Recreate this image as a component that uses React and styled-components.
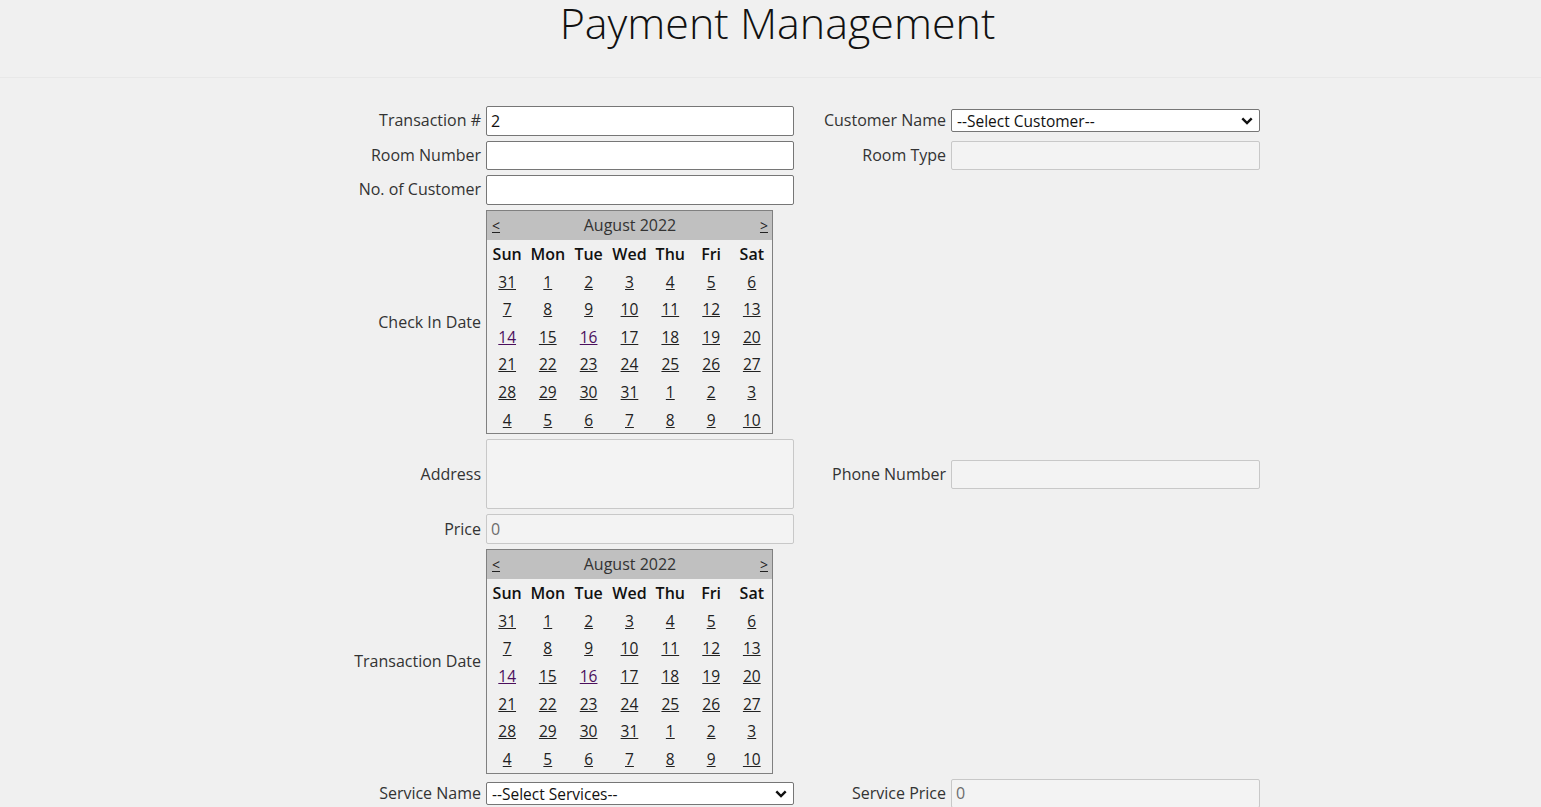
import React from "react"
import styled, { createGlobalStyle } from "styled-components"

const GlobalStyle = createGlobalStyle`
	html, body {
		margin: 0;
		padding: 0;
		overflow: hidden;
	}
	body {
		background: #f0f0f0;
		font-family: "Open Sans", "DejaVu Sans", sans-serif;
		color: #222;
	}
`

const weekDays = ["Sun", "Mon", "Tue", "Wed", "Thu", "Fri", "Sat"]
// weeks shown for August 2022 (starts on Sunday 31 July)
const weeks = [
	[31, 1, 2, 3, 4, 5, 6],
	[7, 8, 9, 10, 11, 12, 13],
	[14, 15, 16, 17, 18, 19, 20],
	[21, 22, 23, 24, 25, 26, 27],
	[28, 29, 30, 31, 1, 2, 3],
	[4, 5, 6, 7, 8, 9, 10],
]
const visited = [14, 16]

function Calendar() {
	return (
		<CalendarTable>
			<thead>
				<tr>
					<TitleCell colSpan={7}>
						<TitleBar>
							<NavLink href="#">&lt;</NavLink>
							<span>August 2022</span>
							<NavLink href="#">&gt;</NavLink>
						</TitleBar>
					</TitleCell>
				</tr>
				<tr>
					{weekDays.map((d) => (
						<DayName key={d}>{d}</DayName>
					))}
				</tr>
			</thead>
			<tbody>
				{weeks.map((week, w) => (
					<tr key={w}>
						{week.map((day, i) => (
							<DayCell key={i}>
								<DayLink
									href="#"
									$visited={w === 2 && visited.includes(day)}
								>
									{day}
								</DayLink>
							</DayCell>
						))}
					</tr>
				))}
			</tbody>
		</CalendarTable>
	)
}

function Dropdown({ placeholder }) {
	return (
		<SelectWrap>
			<Select defaultValue="">
				<option value="">{placeholder}</option>
			</Select>
			<Chevron viewBox="0 0 12 8" aria-hidden="true">
				<path d="M1.3 1.3 L6 6 L10.7 1.3" fill="none" stroke="#111" strokeWidth="2.4" />
			</Chevron>
		</SelectWrap>
	)
}

export default function App() {
	return (
		<>
			<GlobalStyle />
			<Header>
				<Title>Payment Management</Title>
			</Header>
			<Form>
				<Label>Transaction #</Label>
				<TextInput defaultValue="2" />
				<Label>Customer Name</Label>
				<Dropdown placeholder="--Select Customer--" />

				<Label>Room Number</Label>
				<TextInput />
				<Label>Room Type</Label>
				<TextInput disabled />

				<Label>No. of Customer</Label>
				<TextInput />
				<Empty />
				<Empty />

				<Label>Check In Date</Label>
				<Calendar />
				<Empty />
				<Empty />

				<Label>Address</Label>
				<TextArea disabled />
				<Label>Phone Number</Label>
				<TextInput disabled />

				<Label>Price</Label>
				<TextInput disabled defaultValue="0" />
				<Empty />
				<Empty />

				<Label>Transaction Date</Label>
				<Calendar />
				<Empty />
				<Empty />

				<Label>Service Name</Label>
				<Dropdown placeholder="--Select Services--" />
				<Label>Service Price</Label>
				<TextInput disabled defaultValue="0" />
			</Form>
		</>
	)
}

const Header = styled.header`
	height: 77px;
	border-bottom: 1px solid #e8e8e8;
	display: flex;
	justify-content: center;
	align-items: flex-start;
`

const Title = styled.h1`
	margin: 0;
	padding: 3px 0 0 14px;
	font-size: 43px;
	font-weight: 300;
	color: #111;
	line-height: 40px;
`

const Form = styled.div`
	display: grid;
	grid-template-columns: 200px 308px 147px 309px;
	justify-content: center;
	align-items: center;
	column-gap: 5px;
	row-gap: 5px;
	padding-top: 28px;
`

const Label = styled.label`
	text-align: right;
	font-size: 16px;
	color: #333;
	white-space: nowrap;
	line-height: 20px;
	margin-top: -1px;
`

const Empty = styled.div``

const fieldBase = `
	box-sizing: border-box;
	width: 100%;
	font-family: "Open Sans", "DejaVu Sans", sans-serif;
	font-size: 16px;
	color: #111;
	border-radius: 2px;
	outline: none;
`

const TextInput = styled.input`
	${fieldBase}
	height: 29.6px;
	padding: 0 4px;
	background: #fff;
	border: 1px solid #767676;
	&:disabled {
		background: #f3f3f3;
		border-color: #c8c8c8;
		color: #6d6d6d;
	}
`

const TextArea = styled.textarea`
	${fieldBase}
	height: 70px;
	resize: none;
	display: block;
	background: #f3f3f3;
	border: 1px solid #c8c8c8;
`

const SelectWrap = styled.div`
	position: relative;
	height: 23px;
`

const Select = styled.select`
	${fieldBase}
	appearance: none;
	-webkit-appearance: none;
	height: 23px;
	padding: 0 24px 0 5px;
	background: #fff;
	border: 1px solid #767676;
	border-radius: 2px;
	font-size: 15.5px;
`

const Chevron = styled.svg`
	position: absolute;
	right: 7px;
	top: 8px;
	width: 12px;
	height: 8px;
	pointer-events: none;
`

const CalendarTable = styled.table`
	width: 287px;
	border: 1px solid #808080;
	border-collapse: collapse;
	table-layout: fixed;
	font-size: 16px;
	color: #222;
`

const TitleCell = styled.th`
	padding: 0;
	height: 29px;
	background: #c0c0c0;
	font-weight: 400;
`

const TitleBar = styled.div`
	display: flex;
	justify-content: space-between;
	align-items: center;
	padding: 0 4px 0 5px;
	color: #333;
`

const NavLink = styled.a`
	color: #222;
	font-size: 14px;
`

const DayName = styled.th`
	height: 28px;
	padding: 0;
	font-weight: 600;
	color: #111;
`

const DayCell = styled.td`
	height: 27.6px;
	padding: 0;
	text-align: center;
	font-size: 15.5px;
`

const DayLink = styled.a`
	color: ${(p) => (p.$visited ? "#4b0f5c" : "#222")};
`
